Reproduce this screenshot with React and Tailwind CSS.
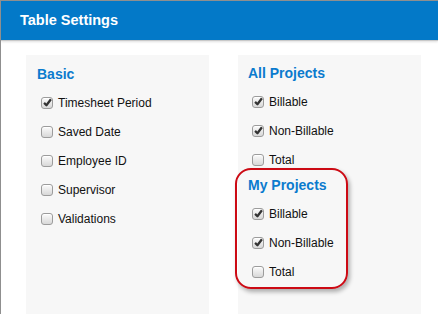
import React from 'react';

const basic = [
    { label: 'Timesheet Period', checked: true },
    { label: 'Saved Date', checked: false },
    { label: 'Employee ID', checked: false },
    { label: 'Supervisor', checked: false },
    { label: 'Validations', checked: false },
];

const projects = [
    { label: 'Billable', checked: true },
    { label: 'Non-Billable', checked: true },
    { label: 'Total', checked: false },
];

function Box({ checked }) {
    return (
        <span className="w-[12px] h-[12px] shrink-0 rounded-[3px] border border-[#9c9c9c] bg-gradient-to-b from-[#fbfbfb] to-[#d8d8d8] flex items-center justify-center shadow-[inset_0_1px_0_#fff]">
            {checked && (
                <svg width="9" height="9" viewBox="0 0 10 10">
                    <path d="M1.2 5.4 L3.8 8 L8.8 1.4" fill="none" stroke="#333" strokeWidth="2.5" strokeLinejoin="round" />
                </svg>
            )}
        </span>
    );
}

function Row({ label, checked }) {
    return (
        <label className="h-[29px] flex items-center gap-[5px] pl-[4px] text-[12px] text-[#111]">
            <Box checked={checked} />
            <span>{label}</span>
        </label>
    );
}

function Heading({ children, className = '' }) {
    return (
        <h2 className={`text-[14px] leading-[16px] font-bold text-[#0b7bce] flex ${className}`}>{children}</h2>
    );
}

export default function App() {
    return (
        <div className="w-[438px] h-[314px] overflow-hidden bg-white border-l border-t border-[#8f8f8f] font-['Liberation_Sans',Arial,sans-serif]">
            <div className="h-[40px] bg-[#0379c8] border-b border-[#c9c9c9] flex items-center pl-[19px] pt-[1px] shadow-[0_1px_2px_rgba(0,0,0,0.12)]">
                <h1 className="text-white font-bold text-[14.5px]">Table Settings</h1>
            </div>

            <div className="flex gap-[29px] pl-[25px] pt-[14px]">
                <div className="w-[183px] h-[280px] bg-[#f7f7f7] pl-[11px] pt-[4px]">
                    <Heading className="h-[29px] items-center">Basic</Heading>
                    {basic.map((item) => (
                        <Row key={item.label} {...item} />
                    ))}
                </div>

                <div className="w-[183px] h-[280px] bg-[#f7f7f7] pl-[10px] pt-[3px]">
                    <Heading className="h-[29px] items-center">All Projects</Heading>
                    {projects.map((item) => (
                        <Row key={'a' + item.label} {...item} />
                    ))}

                    <div className="relative">
                        <Heading className="h-[25px] items-start pt-[3px]">My Projects</Heading>
                        {projects.map((item) => (
                            <Row key={'m' + item.label} {...item} />
                        ))}
                        {/* red highlight drawn over the group */}
                        <div className="absolute top-[-6px] left-[-13px] w-[113px] h-[121px] rounded-[16px] border-2 border-[#cc0a14] shadow-[2px_3px_4px_rgba(0,0,0,0.3)] pointer-events-none" />
                    </div>
                </div>
            </div>
        </div>
    );
}
